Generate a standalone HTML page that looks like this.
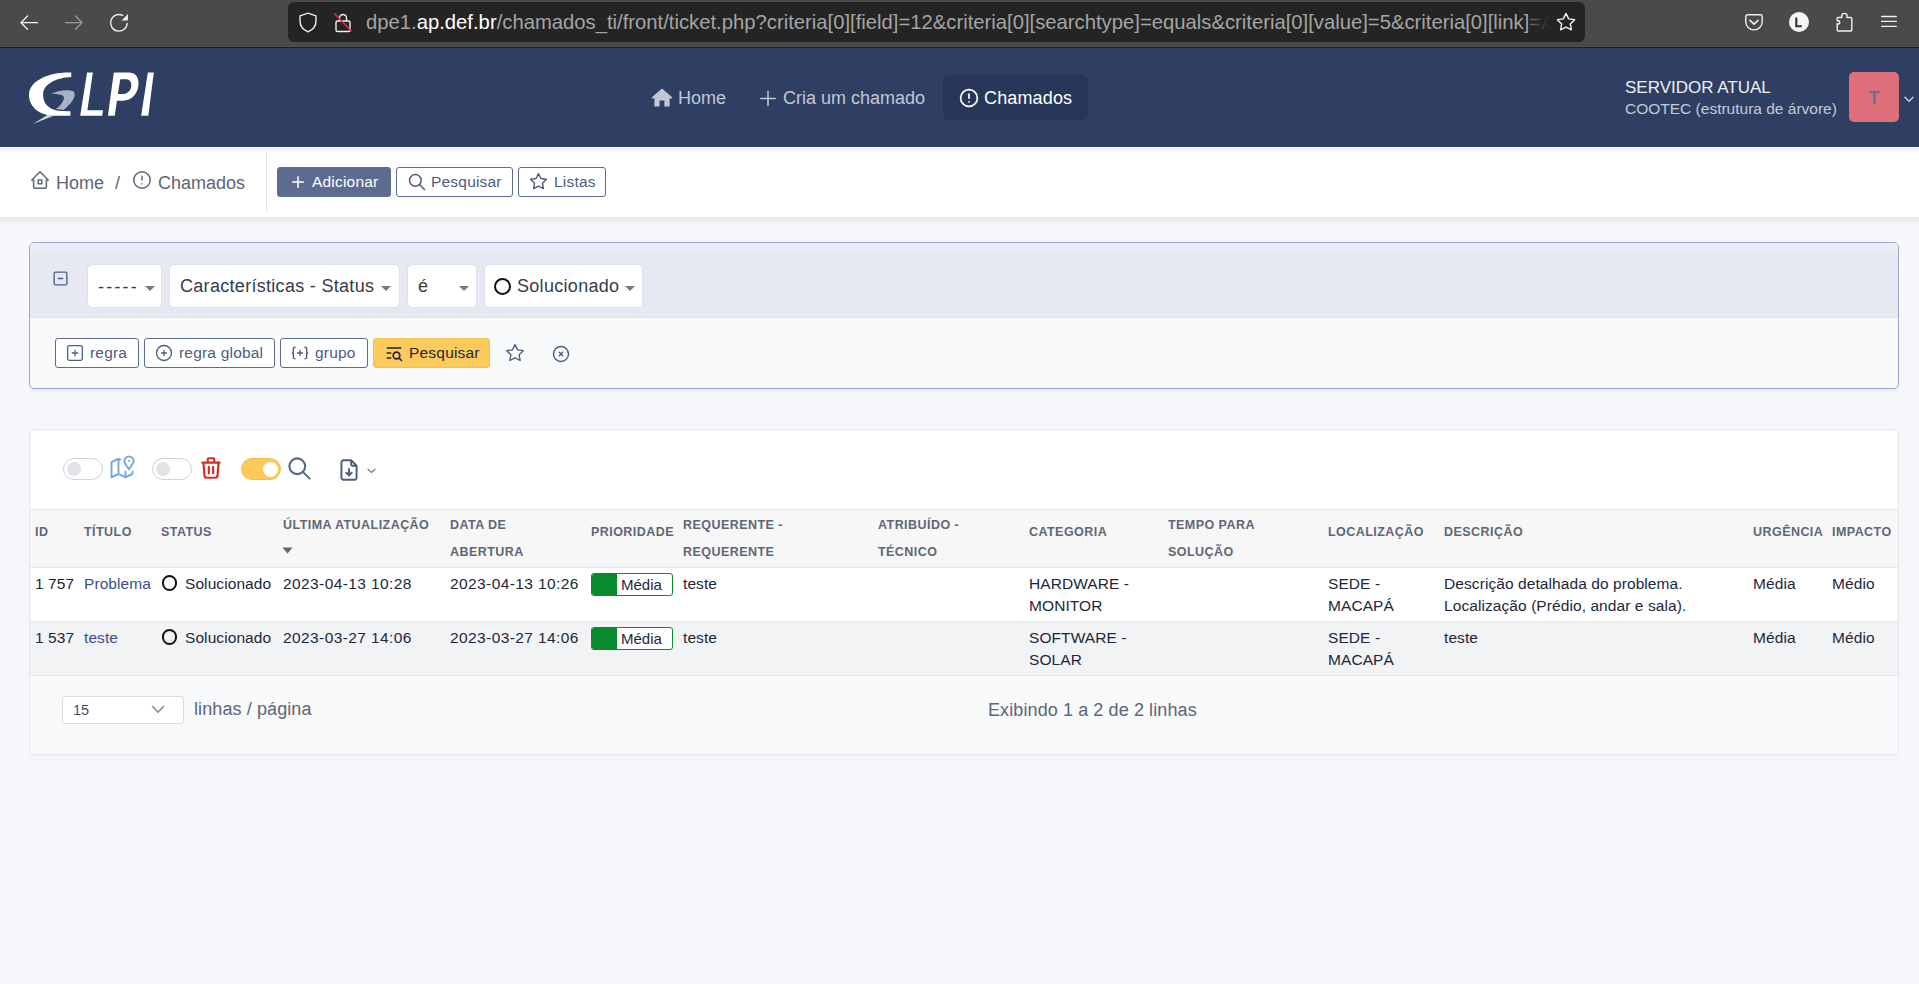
<!DOCTYPE html>
<html><head><meta charset="utf-8">
<style>
*{box-sizing:border-box;margin:0;padding:0}
html,body{width:1919px;height:984px;overflow:hidden}
body{font-family:"Liberation Sans",sans-serif;background:#f5f7fb;position:relative;color:#1d273b}
.abs{position:absolute}
svg{display:block;position:absolute;overflow:visible}
.ic{fill:none;stroke:currentColor;stroke-linecap:round;stroke-linejoin:round}
/* browser chrome */
#chrome{left:0;top:0;width:1919px;height:48px;background:#4a4a4a;border-bottom:1px solid #1e1e1e;box-shadow:inset 0 -1px 0 #525252}
#url{left:288px;top:2px;width:1297px;height:40px;background:#242424;border-radius:6px}
#urltext{left:366px;top:10px;font-size:20.25px;line-height:24px;color:#a4a4a4;white-space:nowrap;width:1183px;overflow:hidden}
#urltext b{font-weight:normal;color:#fff}
/* header */
#hdr{left:0;top:48px;width:1919px;height:99px;background:#2f3f64}
.nav{top:86px;font-size:18px;color:#c1c7d3;white-space:nowrap;line-height:24px}
#navact{left:943px;top:75px;width:145px;height:45px;background:#28365a;border-radius:6px}
/* breadcrumb */
#bc{left:0;top:147px;width:1919px;height:70px;background:linear-gradient(#fff 0,#fff 1px,#f0f0f1 1px,#fff 6px)}
.bct{font-size:18px;color:#5d6577;white-space:nowrap;line-height:24px}
.btn{letter-spacing:.2px;height:30px;border:1px solid #5b6a8f;border-radius:3px;font-size:15.5px;color:#4d5c82;white-space:nowrap;background:#fff;line-height:28px}
/* search card */
#scard{left:29px;top:242px;width:1870px;height:147px;border:1px solid #97a8d0;border-radius:5px;background:#f9fafc;overflow:hidden}
#stop{left:0;top:0;width:100%;height:75px;background:#e6e9f1;border-bottom:1px solid #dde0e7}
.sel{height:44px;background:#fff;border:1px solid #dde1ea;border-radius:5px;font-size:18px;color:#363d4b;white-space:nowrap;top:263.5px;line-height:43px;letter-spacing:.3px}
.caret{width:0;height:0;border-left:5px solid transparent;border-right:5px solid transparent;border-top:5px solid #7b7b7b;position:absolute;top:21px}
.rbtn{letter-spacing:.2px;top:338px;height:30px;border:1px solid #5b6a8f;border-radius:3px;font-size:15.5px;color:#4d5c82;white-space:nowrap;background:#fff;line-height:28px}
/* table card */
#tcard{left:29px;top:429px;width:1870px;height:326px;background:#fff;border:1px solid #e3e6eb;border-radius:4px;overflow:hidden;box-shadow:0 1px 2px rgba(30,40,60,.04)}
.th{font-size:12.5px;font-weight:bold;color:#5f6675;letter-spacing:.45px;white-space:nowrap;line-height:27px}
.td{font-size:15.5px;color:#1d273b;white-space:nowrap;line-height:22px;letter-spacing:.08px}
.dt{letter-spacing:.4px}
.lnk{color:#3b4f8c}
.toggle{width:40px;height:22px;border:1px solid #cfd3da;border-radius:11px;background:#fff}
.toggle i{position:absolute;left:3px;top:3px;width:14px;height:14px;border-radius:50%;background:#e2e3e6}
.stc{width:15.5px;height:15.5px;border:2px solid #111;border-radius:50%}
.badge{width:82px;height:23px;border:1.5px solid #0a8a2e;border-radius:3px;background:#fff;overflow:hidden}
.badge i{position:absolute;left:0;top:0;width:25px;height:100%;background:#0a8a2e}
.badge span{position:absolute;left:29px;top:0;font-size:15px;line-height:21px;color:#1d273b}
</style></head>
<body>
<!-- ============ browser chrome ============ -->
<div id="chrome" class="abs"></div>
<svg style="left:20px;top:15px" width="18" height="16" viewBox="0 0 18 16" class="ic"><path d="M17.5 7.7H1M7.5 1L1 7.7l6.5 6.6" stroke="#f2f2f2" stroke-width="1.3"/></svg>
<svg style="left:65px;top:15px" width="18" height="16" viewBox="0 0 18 16" class="ic"><path d="M0.5 7.7H17M10.5 1L17 7.7l-6.5 6.6" stroke="#9a9a9a" stroke-width="1.3"/></svg>
<svg style="left:110px;top:14px" width="18" height="18" viewBox="0 0 18 18"><path d="M17.2 8.9A8.3 8.3 0 1 1 13.3 1.8" fill="none" stroke="#f2f2f2" stroke-width="1.3"/><path d="M17.9 0.1V6.4H11.6z" fill="#f2f2f2"/></svg>
<div id="url" class="abs"></div>
<svg style="left:298px;top:12px" width="20" height="21" viewBox="0 0 20 21"><path d="M10 1.2L2 3.8V9c0 5 3.5 9 8 10.8 4.5-1.8 8-5.8 8-10.8V3.8z" fill="none" stroke="#f0f0f0" stroke-width="1.4" stroke-linejoin="round"/></svg>
<svg style="left:333px;top:12px" width="20" height="21" viewBox="0 0 20 21"><rect x="3" y="9" width="14" height="10.5" rx="1.5" fill="none" stroke="#f0f0f0" stroke-width="1.4"/><path d="M6.5 9V6a3.5 3.5 0 0 1 7 0v3" fill="none" stroke="#f0f0f0" stroke-width="1.4"/><path d="M1.5 1.5L18.5 19.5" stroke="#e22850" stroke-width="1.6"/></svg>
<div id="urltext" class="abs">dpe1.<b>ap.def.br</b>/chamados_ti/front/ticket.php?criteria[0][field]=12&amp;criteria[0][searchtype]=equals&amp;criteria[0][value]=5&amp;criteria[0][link]=AND</div>
<div class="abs" style="left:1528px;top:4px;width:22px;height:36px;background:linear-gradient(90deg,rgba(36,36,36,.35),rgba(36,36,36,.85) 70%,#242424)"></div>
<svg style="left:1555px;top:11px" width="22" height="22" viewBox="0 0 24 24" class="ic"><path d="M12 2.6l2.9 6 6.6.9-4.8 4.6 1.2 6.5L12 17.5l-5.9 3.1 1.2-6.5-4.8-4.6 6.6-.9z" stroke="#f0f0f0" stroke-width="1.5"/></svg>
<svg style="left:1745px;top:14px" width="18" height="17" viewBox="0 0 18 17"><path d="M2.5 0.8h13a1.7 1.7 0 0 1 1.7 1.7v5.2A8.2 8.2 0 0 1 .8 7.7V2.5A1.7 1.7 0 0 1 2.5.8z" fill="none" stroke="#f0f0f0" stroke-width="1.4"/><path d="M5 6.3l4 3.8 4-3.8" fill="none" stroke="#f0f0f0" stroke-width="1.6" stroke-linecap="round" stroke-linejoin="round"/></svg>
<svg style="left:1789px;top:12px" width="20" height="20" viewBox="0 0 20 20"><circle cx="10" cy="10" r="10" fill="#f5f5f5"/><path d="M7.3 5.5v8.7h5.6" fill="none" stroke="#333" stroke-width="2.1"/></svg>
<svg style="left:1836px;top:12px" width="17" height="20" viewBox="0 0 17 20"><path d="M1.2 11.5V18a1 1 0 0 0 1 1h12.6a1 1 0 0 0 1-1V6.5a1 1 0 0 0-1-1H11V4a2.6 2.6 0 0 0-5.2 0v1.5H2.2a1 1 0 0 0-1 1v2.3h1a1.6 1.6 0 0 1 0 3.2h-1z" fill="none" stroke="#f0f0f0" stroke-width="1.4" stroke-linejoin="round"/></svg>
<svg style="left:1881px;top:15px" width="16" height="13" viewBox="0 0 16 13"><path d="M.7 1.5h14.6M.7 6.4h14.6M.7 11.4h14.6" stroke="#f0f0f0" stroke-width="1.4" stroke-linecap="round"/></svg>

<!-- ============ header ============ -->
<div id="hdr" class="abs"></div>
<svg style="left:20px;top:60px" width="150" height="70" viewBox="0 0 1919 896">
 <path d="M655,160 L655,218 C480,225 300,300 295,440 C292,560 380,645 520,652 L645,655 L645,715 L440,715 C250,705 110,600 115,440 C120,260 380,150 655,160 Z" fill="#fff"/>
 <path d="M390,432 C480,390 620,370 680,400 C725,435 690,520 615,585 L560,640 L455,628 C520,585 575,505 560,470 C540,440 470,430 390,432 Z" fill="#a9b1c4"/>
 <path d="M165,818 L355,702 L430,712 Z" fill="#d0d5df"/>
 <path d="M858,160 L932,160 L862,642 L1062,642 L1052,715 L770,715 Z" fill="#fff"/>
 <path fill="#fff" fill-rule="evenodd" d="M1200,160 L1400,160 C1495,165 1525,245 1515,330 C1500,445 1420,518 1320,520 L1240,520 L1212,715 L1125,715 Z M1283,245 L1362,245 C1412,248 1432,292 1422,345 C1410,402 1372,432 1322,434 L1252,434 Z"/>
 <path d="M1636,160 L1712,160 L1642,715 L1550,715 Z" fill="#fff"/>
</svg>
<div id="navact" class="abs"></div>
<svg style="left:651px;top:88px" width="22" height="19" viewBox="0 0 22 19"><path d="M11 .6L.6 9.6 1.9 11 3.4 9.8V18.4H8.6V12.6H13.4V18.4H18.6V9.8L20.1 11 21.4 9.6z" fill="#c1c7d3"/></svg>
<div class="abs nav" style="left:678px">Home</div>
<svg style="left:760px;top:91px" width="16" height="15" viewBox="0 0 16 15"><path d="M8 .5v14M.8 7.5h14.4" stroke="#c1c7d3" stroke-width="1.6" stroke-linecap="round"/></svg>
<div class="abs nav" style="left:783px">Cria um chamado</div>
<svg style="left:957px;top:86px" width="24" height="24" viewBox="0 0 24 24" class="ic" stroke-width="1.7" color="#fff"><circle cx="12" cy="12" r="8.4"/><path d="M12 8v4.2M12 15.8v.1"/></svg>
<div class="abs nav" style="left:984px;color:#fff;letter-spacing:.15px">Chamados</div>
<div class="abs" style="left:1625px;top:78px;font-size:17px;color:#eef0f5;white-space:nowrap;line-height:20px">SERVIDOR ATUAL</div>
<div class="abs" style="left:1625px;top:100px;font-size:15.5px;color:#c4cad6;white-space:nowrap;line-height:18px">COOTEC (estrutura de árvore)</div>
<div class="abs" style="left:1849px;top:72px;width:50px;height:50px;background:#dd6e7a;border-radius:5px;color:#687383;font-size:18px;font-weight:bold;text-align:center;line-height:53px">T</div>
<svg style="left:1904px;top:96px" width="10" height="7" viewBox="0 0 10 7"><path d="M1 1.2l4 4 4-4" fill="none" stroke="#c8cdd8" stroke-width="1.5" stroke-linecap="round"/></svg>

<!-- ============ breadcrumb ============ -->
<div id="bc" class="abs"></div><div class="abs" style="left:0;top:217px;width:1919px;height:9px;background:linear-gradient(#e7e8ec,rgba(245,247,251,0))"></div>
<svg style="left:29px;top:169px" width="22" height="22" viewBox="0 0 24 24" class="ic" stroke-width="1.6" color="#5d6577"><path d="M5 12H3l9-9 9 9h-2M5 12v7a2 2 0 0 0 2 2h10a2 2 0 0 0 2-2v-7"/><path d="M10 12h4v4h-4z"/></svg>
<div class="abs bct" style="left:56px;top:171px">Home</div>
<div class="abs bct" style="left:115px;top:171px">/</div>
<svg style="left:131px;top:169px" width="22" height="22" viewBox="0 0 24 24" class="ic" stroke-width="1.6" color="#5d6577"><circle cx="12" cy="12" r="9"/><path d="M12 8v4M12 16v.01"/></svg>
<div class="abs bct" style="left:158px;top:171px">Chamados</div>
<div class="abs" style="left:266px;top:152px;width:1px;height:60px;background:#e3e5ea"></div>
<div class="abs btn" style="left:277px;top:167px;width:114px;background:#5e6b91;border-color:#5e6b91;color:#fff;padding-left:34px">Adicionar</div>
<svg style="left:289px;top:173px" width="18" height="18" viewBox="0 0 24 24" class="ic" stroke-width="2" color="#fff"><path d="M12 5v14M5 12h14"/></svg>
<div class="abs btn" style="left:396px;top:167px;width:117px;padding-left:34px">Pesquisar</div>
<svg style="left:407px;top:172px" width="20" height="20" viewBox="0 0 24 24" class="ic" stroke-width="1.9" color="#4d5c82"><circle cx="10" cy="10" r="7"/><path d="M21 21l-6-6"/></svg>
<div class="abs btn" style="left:518px;top:167px;width:88px;padding-left:35px">Listas</div>
<svg style="left:529px;top:172px" width="19" height="19" viewBox="0 0 24 24" class="ic" stroke-width="1.8" color="#4d5c82"><path d="M12 17.75l-6.172 3.245 1.179-6.873-5-4.867 6.9-1L12 2l3.086 6.253 6.9 1-5 4.867 1.179 6.873z"/></svg>

<!-- ============ search card ============ -->
<div class="abs" style="left:30px;top:389px;width:1868px;height:5px;background:linear-gradient(rgba(20,30,60,.05),rgba(20,30,60,0))"></div><div id="scard" class="abs"><div id="stop" class="abs"></div><div class="abs" style="left:0;top:0;width:100%;height:10px;background:#eaedf3"></div></div>
<svg style="left:52px;top:270px" width="17" height="17" viewBox="0 0 24 24" class="ic" stroke-width="1.9" color="#4d5c82"><rect x="3" y="3" width="18" height="18" rx="2"/><path d="M9 12h6"/></svg>
<div class="abs sel" style="left:87px;width:75px;padding-left:10px"><span style="letter-spacing:2.2px;position:relative;top:1px">-----</span><span class="caret" style="left:57px"></span></div>
<div class="abs sel" style="left:169px;width:231px;padding-left:10px">Características - Status<span class="caret" style="left:211px"></span></div>
<div class="abs sel" style="left:407px;width:70px;padding-left:10px">é<span class="caret" style="left:51px"></span></div>
<div class="abs sel" style="left:484px;width:159px;padding-left:32px">Solucionado<span class="caret" style="left:140px"></span></div>
<div class="abs stc" style="left:494px;top:278px;width:17px;height:17px;border-width:2px"></div>
<div class="abs rbtn" style="left:55px;width:84px;padding-left:34px">regra</div>
<svg style="left:64px;top:342px" width="22" height="22" viewBox="0 0 24 24" class="ic" stroke-width="1.4" color="#4d5c82"><rect x="4" y="4" width="16" height="16" rx="2"/><path d="M9 12h6M12 9v6"/></svg>
<div class="abs rbtn" style="left:144px;width:131px;padding-left:34px">regra global</div>
<svg style="left:154px;top:343px" width="20" height="20" viewBox="0 0 24 24" class="ic" stroke-width="1.6" color="#4d5c82"><circle cx="12" cy="12" r="9"/><path d="M9 12h6M12 9v6"/></svg>
<div class="abs rbtn" style="left:280px;width:88px;padding-left:34px">grupo</div>
<svg style="left:290px;top:343px" width="20" height="20" viewBox="0 0 24 24" class="ic" stroke-width="1.7" color="#4d5c82"><path d="M9 12h6M12 9v6M6 19a2 2 0 0 1-2-2v-4l-1-1 1-1V7a2 2 0 0 1 2-2M18 19a2 2 0 0 0 2-2v-4l1-1-1-1V7a2 2 0 0 0-2-2"/></svg>
<div class="abs rbtn" style="left:373px;width:117px;background:#fdca5c;border-color:#f4c04f;color:#1d273b;padding-left:35px">Pesquisar</div>
<svg style="left:384px;top:343px" width="20" height="20" viewBox="0 0 24 24" class="ic" stroke-width="2" color="#1d273b"><path d="M4 6h16M4 12h4M4 18h4"/><circle cx="15" cy="15" r="4"/><path d="M18.5 18.5L21 21"/></svg>
<svg style="left:505px;top:343px" width="20" height="20" viewBox="0 0 24 24" class="ic" stroke-width="1.6" color="#4d5c82"><path d="M12 17.75l-6.172 3.245 1.179-6.873-5-4.867 6.9-1L12 2l3.086 6.253 6.9 1-5 4.867 1.179 6.873z"/></svg>
<svg style="left:551px;top:344px" width="20" height="20" viewBox="0 0 24 24" class="ic" stroke-width="1.7" color="#4d5c82"><circle cx="12" cy="12" r="9"/><path d="M10 10l4 4m0-4l-4 4"/></svg>

<!-- ============ table card ============ -->
<div id="tcard" class="abs">
  <div class="abs" style="left:0;top:79px;width:100%;height:59px;background:#f7f7f8;border-top:1px solid #e6e7e9;border-bottom:1px solid #e6e7e9"></div>
  <div class="abs" style="left:0;top:191px;width:100%;height:55px;background:#f2f3f5;border-top:1px solid #e6e7e9;border-bottom:1px solid #e6e7e9"></div>
  <div class="abs" style="left:0;top:246px;width:100%;height:80px;background:#f9fafc"></div>
</div>
<div class="abs toggle" style="left:63px;top:458px"><i></i></div>
<svg style="left:108px;top:454px" width="28" height="28" viewBox="0 0 24 24" class="ic" stroke-width="1.6" color="#72a4e6"><path d="M18 6v.01M18 13l-3.5-5a4 4 0 1 1 7 0L18 13M10.5 4.75L9 4 3 7v13l6-3 6 3 6-3v-2M9 4v13M15 15v5"/></svg>
<div class="abs toggle" style="left:152px;top:458px"><i></i></div>
<svg style="left:198px;top:455px" width="26" height="26" viewBox="0 0 24 24" class="ic" stroke-width="2" color="#d52b2b"><path d="M4 7h16M10 11v6M14 11v6M5 7l1 12a2 2 0 0 0 2 2h8a2 2 0 0 0 2-2l1-12M9 7V4a1 1 0 0 1 1-1h4a1 1 0 0 1 1 1v3"/></svg>
<div class="abs toggle" style="left:241px;top:458px;background:#fdc95b;border-color:#f3bd4a"><i style="left:21px;top:2.5px;width:15px;height:15px;background:#fff;"></i></div>
<svg style="left:286px;top:455px" width="27" height="27" viewBox="0 0 24 24" class="ic" stroke-width="1.8" color="#56648a"><circle cx="10" cy="10" r="7"/><path d="M21 21l-6-6"/></svg>
<svg style="left:336px;top:457px" width="26" height="26" viewBox="0 0 24 24" class="ic" stroke-width="1.8" color="#4d5c82"><path d="M14 3v4a1 1 0 0 0 1 1h4M17 21H7a2 2 0 0 1-2-2V5a2 2 0 0 1 2-2h7l5 5v11a2 2 0 0 1-2 2zM12 17v-6M9.5 14.5L12 17l2.5-2.5"/></svg>
<svg style="left:367px;top:468px" width="9" height="6" viewBox="0 0 9 6"><path d="M1 1.2l3.5 3.3L8 1.2" fill="none" stroke="#6b7896" stroke-width="1.2" stroke-linecap="round"/></svg>

<!-- table header -->
<div class="abs th" style="left:35px;top:519px">ID</div>
<div class="abs th" style="left:84px;top:519px">TÍTULO</div>
<div class="abs th" style="left:161px;top:519px">STATUS</div>
<div class="abs th" style="left:283px;top:512px">ÚLTIMA ATUALIZAÇÃO</div>
<svg style="left:282px;top:547px" width="11" height="7" viewBox="0 0 11 7"><path d="M.5.5h10L5.5 6.5z" fill="#5f6777"/></svg>
<div class="abs th" style="left:450px;top:512px">DATA DE<br>ABERTURA</div>
<div class="abs th" style="left:591px;top:519px">PRIORIDADE</div>
<div class="abs th" style="left:683px;top:512px">REQUERENTE -<br>REQUERENTE</div>
<div class="abs th" style="left:878px;top:512px">ATRIBUÍDO -<br>TÉCNICO</div>
<div class="abs th" style="left:1029px;top:519px">CATEGORIA</div>
<div class="abs th" style="left:1168px;top:512px">TEMPO PARA<br>SOLUÇÃO</div>
<div class="abs th" style="left:1328px;top:519px">LOCALIZAÇÃO</div>
<div class="abs th" style="left:1444px;top:519px">DESCRIÇÃO</div>
<div class="abs th" style="left:1753px;top:519px">URGÊNCIA</div>
<div class="abs th" style="left:1832px;top:519px">IMPACTO</div>

<!-- rows -->
<div class="abs td" style="left:35px;top:573px">1 757</div>
<div class="abs td lnk" style="left:84px;top:573px">Problema</div>
<div class="abs stc" style="left:161.5px;top:575.3px"></div>
<div class="abs td" style="left:185px;top:573px">Solucionado</div>
<div class="abs td dt" style="left:283px;top:573px">2023-04-13 10:28</div>
<div class="abs td dt" style="left:450px;top:573px">2023-04-13 10:26</div>
<div class="abs badge" style="left:591px;top:573px"><i></i><span>Média</span></div>
<div class="abs td" style="left:683px;top:573px">teste</div>
<div class="abs td" style="left:1029px;top:573px">HARDWARE -<br>MONITOR</div>
<div class="abs td" style="left:1328px;top:573px">SEDE -<br>MACAPÁ</div>
<div class="abs td" style="left:1444px;top:573px">Descrição detalhada do problema.<br>Localização (Prédio, andar e sala).</div>
<div class="abs td" style="left:1753px;top:573px">Média</div>
<div class="abs td" style="left:1832px;top:573px">Médio</div>

<div class="abs td" style="left:35px;top:627px">1 537</div>
<div class="abs td lnk" style="left:84px;top:627px">teste</div>
<div class="abs stc" style="left:161.5px;top:629.3px"></div>
<div class="abs td" style="left:185px;top:627px">Solucionado</div>
<div class="abs td dt" style="left:283px;top:627px">2023-03-27 14:06</div>
<div class="abs td dt" style="left:450px;top:627px">2023-03-27 14:06</div>
<div class="abs badge" style="left:591px;top:627px"><i></i><span>Média</span></div>
<div class="abs td" style="left:683px;top:627px">teste</div>
<div class="abs td" style="left:1029px;top:627px">SOFTWARE -<br>SOLAR</div>
<div class="abs td" style="left:1328px;top:627px">SEDE -<br>MACAPÁ</div>
<div class="abs td" style="left:1444px;top:627px">teste</div>
<div class="abs td" style="left:1753px;top:627px">Média</div>
<div class="abs td" style="left:1832px;top:627px">Médio</div>

<!-- footer -->
<div class="abs" style="left:62px;top:696px;width:122px;height:28px;background:#fff;border:1px solid #dadcdf;border-radius:3px;font-size:14.5px;color:#474e5c;padding-left:10px;line-height:26px">15</div>
<svg style="left:151px;top:705px" width="14" height="9" viewBox="0 0 14 9"><path d="M1.5 1.5l5.5 5.5 5.5-5.5" fill="none" stroke="#8a8f98" stroke-width="1.6" stroke-linecap="round"/></svg>
<div class="abs" style="left:194px;top:698px;font-size:18px;color:#5d6577;white-space:nowrap;line-height:22px;letter-spacing:.1px">linhas / página</div>
<div class="abs" style="left:988px;top:699px;font-size:18px;color:#5d6577;white-space:nowrap;line-height:22px;letter-spacing:.1px">Exibindo 1 a 2 de 2 linhas</div>
</body></html>
